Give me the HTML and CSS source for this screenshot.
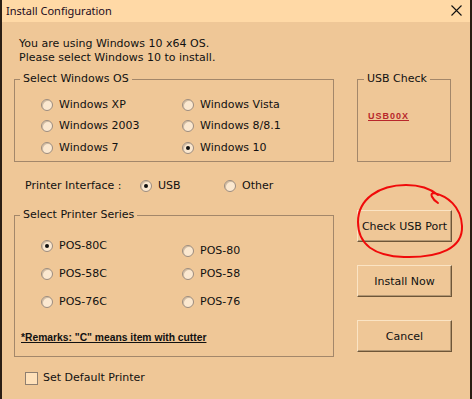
FILE: index.html
```html
<!DOCTYPE html>
<html>
<head>
<meta charset="utf-8">
<link rel="stylesheet" href="styles.css">
</head>
<body>
<div class="window">
  <div class="titlebar">
    <span class="title">Install Configuration</span>
    <svg class="close" width="11" height="11" viewBox="0 0 11 11"><path d="M0.5 0.5 L10.5 10.5 M10.5 0.5 L0.5 10.5" stroke="#111" stroke-width="1.1" fill="none"/></svg>
  </div>
  <div class="client">
    <p class="intro">You are using Windows 10 x64 OS.<br>Please select Windows 10 to install.</p>

    <div class="row">
      <fieldset class="group group-main">
        <legend>Select Windows OS</legend>
        <div class="os-grid">
          <label class="opt"><input type="radio" class="radio" name="os">Windows XP</label>
          <label class="opt"><input type="radio" class="radio" name="os">Windows Vista</label>
          <label class="opt"><input type="radio" class="radio" name="os">Windows 2003</label>
          <label class="opt"><input type="radio" class="radio" name="os">Windows 8/8.1</label>
          <label class="opt"><input type="radio" class="radio" name="os">Windows 7</label>
          <label class="opt"><input type="radio" class="radio" name="os" checked>Windows 10</label>
        </div>
      </fieldset>
      <fieldset class="group group-usb">
        <legend>USB Check</legend>
        <a class="usb-link">USB00X</a>
      </fieldset>
    </div>

    <div class="iface">
      <span class="iface-label">Printer Interface :</span>
      <label class="opt opt-usb"><input type="radio" class="radio" name="iface" checked>USB</label>
      <label class="opt"><input type="radio" class="radio" name="iface">Other</label>
    </div>

    <div class="row row-series">
      <fieldset class="group group-main group-series">
        <legend>Select Printer Series</legend>
        <div class="series-grid">
          <label class="opt"><input type="radio" class="radio" name="pos" checked>POS-80C</label>
          <label class="opt opt-low"><input type="radio" class="radio" name="pos">POS-80</label>
          <label class="opt"><input type="radio" class="radio" name="pos">POS-58C</label>
          <label class="opt"><input type="radio" class="radio" name="pos">POS-58</label>
          <label class="opt"><input type="radio" class="radio" name="pos">POS-76C</label>
          <label class="opt"><input type="radio" class="radio" name="pos">POS-76</label>
        </div>
        <p class="remarks">*Remarks: "C" means item with cutter</p>
      </fieldset>
      <div class="buttons">
        <button class="btn">Check USB Port</button>
        <button class="btn">Install Now</button>
        <button class="btn">Cancel</button>
      </div>
    </div>

    <label class="check"><input type="checkbox" class="checkbox">Set Default Printer</label>
  </div>

  <svg class="scribble" width="472" height="399" viewBox="0 0 472 399">
    <path d="M438 203 C432 199 429 193 434 193 C447 196 461 206 462 226 C463 248 440 258 404 257 C374 256 358 244 358 222 C358 199 379 185 406 185 C421 185 431 189 438 195" fill="none" stroke="#f00a0a" stroke-width="2" stroke-linecap="round"/>
  </svg>
</div>
</body>
</html>
```
FILE: styles.css
```css
* { box-sizing: border-box; }
html, body { margin: 0; padding: 0; }
body {
  width: 472px;
  height: 399px;
  overflow: hidden;
  background: #efc797;
  font-family: "DejaVu Sans", Tahoma, sans-serif;
  font-size: 11px;
  color: #111;
}
.window {
  position: relative;
  width: 472px;
  height: 399px;
  border-left: 2px solid #2a1e14;
  border-right: 2px solid #2a1e14;
  background: #efc797;
}
.titlebar {
  height: 22px;
  background: #ffd9a6;
  display: flex;
  align-items: center;
  justify-content: space-between;
  padding: 0 8px 0 4px;
}
.title {
  font-family: "Noto Sans", "Open Sans", sans-serif;
  font-size: 11px;
  color: #1c0b1e;
  line-height: 22px;
}
.close { display: block; margin-top: -1px; }
.client {
  padding: 15px 0 0 12px;
  line-height: 14px;
}
.intro {
  margin: 0 0 7px 5px;
  line-height: 14px;
}
.row {
  display: flex;
  gap: 23px;
  align-items: flex-start;
}
.group {
  margin: 0;
  padding: 0;
  min-width: 0;
  border: 1px solid #a3876a;
}
.group legend {
  padding: 0 3px;
  margin-left: 5px;
  line-height: 14px;
}
.group-main { width: 320px; }
.os-grid {
  display: grid;
  grid-template-columns: 141px 1fr;
  grid-auto-rows: 21.5px;
  padding: 8px 0 2.5px 26px;
  align-items: center;
}
.opt {
  display: flex;
  align-items: center;
  gap: 6px;
  line-height: 14px;
}
.radio {
  appearance: none;
  -webkit-appearance: none;
  margin: 0;
  width: 12px;
  height: 12px;
  border-radius: 50%;
  border: 1px solid #9c8c7e;
  background: #fbe8d0;
  box-shadow: inset 1px 1px 0 #d2bca2;
  display: grid;
  place-items: center;
  flex: none;
}
.radio:checked::after {
  content: "";
  width: 4px;
  height: 4px;
  border-radius: 50%;
  background: #111;
}
.group-usb {
  width: 94px;
  height: 90px;
}
.group-usb legend { margin-left: 6px; }
.usb-link {
  display: inline-block;
  margin: 25px 0 0 10px;
  font-family: "Liberation Sans", Arial, sans-serif;
  font-weight: bold;
  font-size: 9px;
  letter-spacing: 1px;
  color: #b8272b;
  text-decoration: underline;
  line-height: 11px;
}
.iface {
  display: flex;
  align-items: center;
  margin-top: 17px;
  padding-left: 11px;
  height: 14px;
}
.iface-label { width: 115px; }
.opt-usb { width: 84px; }
.row-series { margin-top: 15px; }
.series-grid {
  display: grid;
  grid-template-columns: 141px 1fr;
  grid-auto-rows: 28px;
  padding: 10px 0 0 26px;
  align-items: center;
}
.opt-low {
  align-self: start;
  margin-top: 12px;
}
.remarks {
  margin: 15px 0 0 6px;
  padding-bottom: 11px;
  font-family: "Liberation Sans", Arial, sans-serif;
  font-weight: bold;
  font-size: 10.3px;
  line-height: 14px;
  text-decoration: underline;
}
.buttons {
  display: flex;
  flex-direction: column;
  gap: 23px;
  padding-top: 2px;
}
.btn {
  width: 95px;
  height: 32px;
  padding: 0;
  font-family: "DejaVu Sans", Tahoma, sans-serif;
  font-size: 11px;
  color: #111;
  background: #efc797;
  border: 1px solid;
  border-color: #fbe4c4 #6e5638 #6e5638 #fbe4c4;
  box-shadow: inset -1px -1px 0 #b39773;
}
.check {
  display: flex;
  align-items: center;
  gap: 5px;
  margin-top: 14px;
  padding-left: 11px;
  line-height: 14px;
}
.checkbox {
  appearance: none;
  -webkit-appearance: none;
  margin: 0;
  width: 13px;
  height: 13px;
  border: 1px solid #8f7f70;
  background: #ffe1ba;
  flex: none;
}
.scribble {
  position: absolute;
  left: -2px;
  top: 0;
  pointer-events: none;
}
```
